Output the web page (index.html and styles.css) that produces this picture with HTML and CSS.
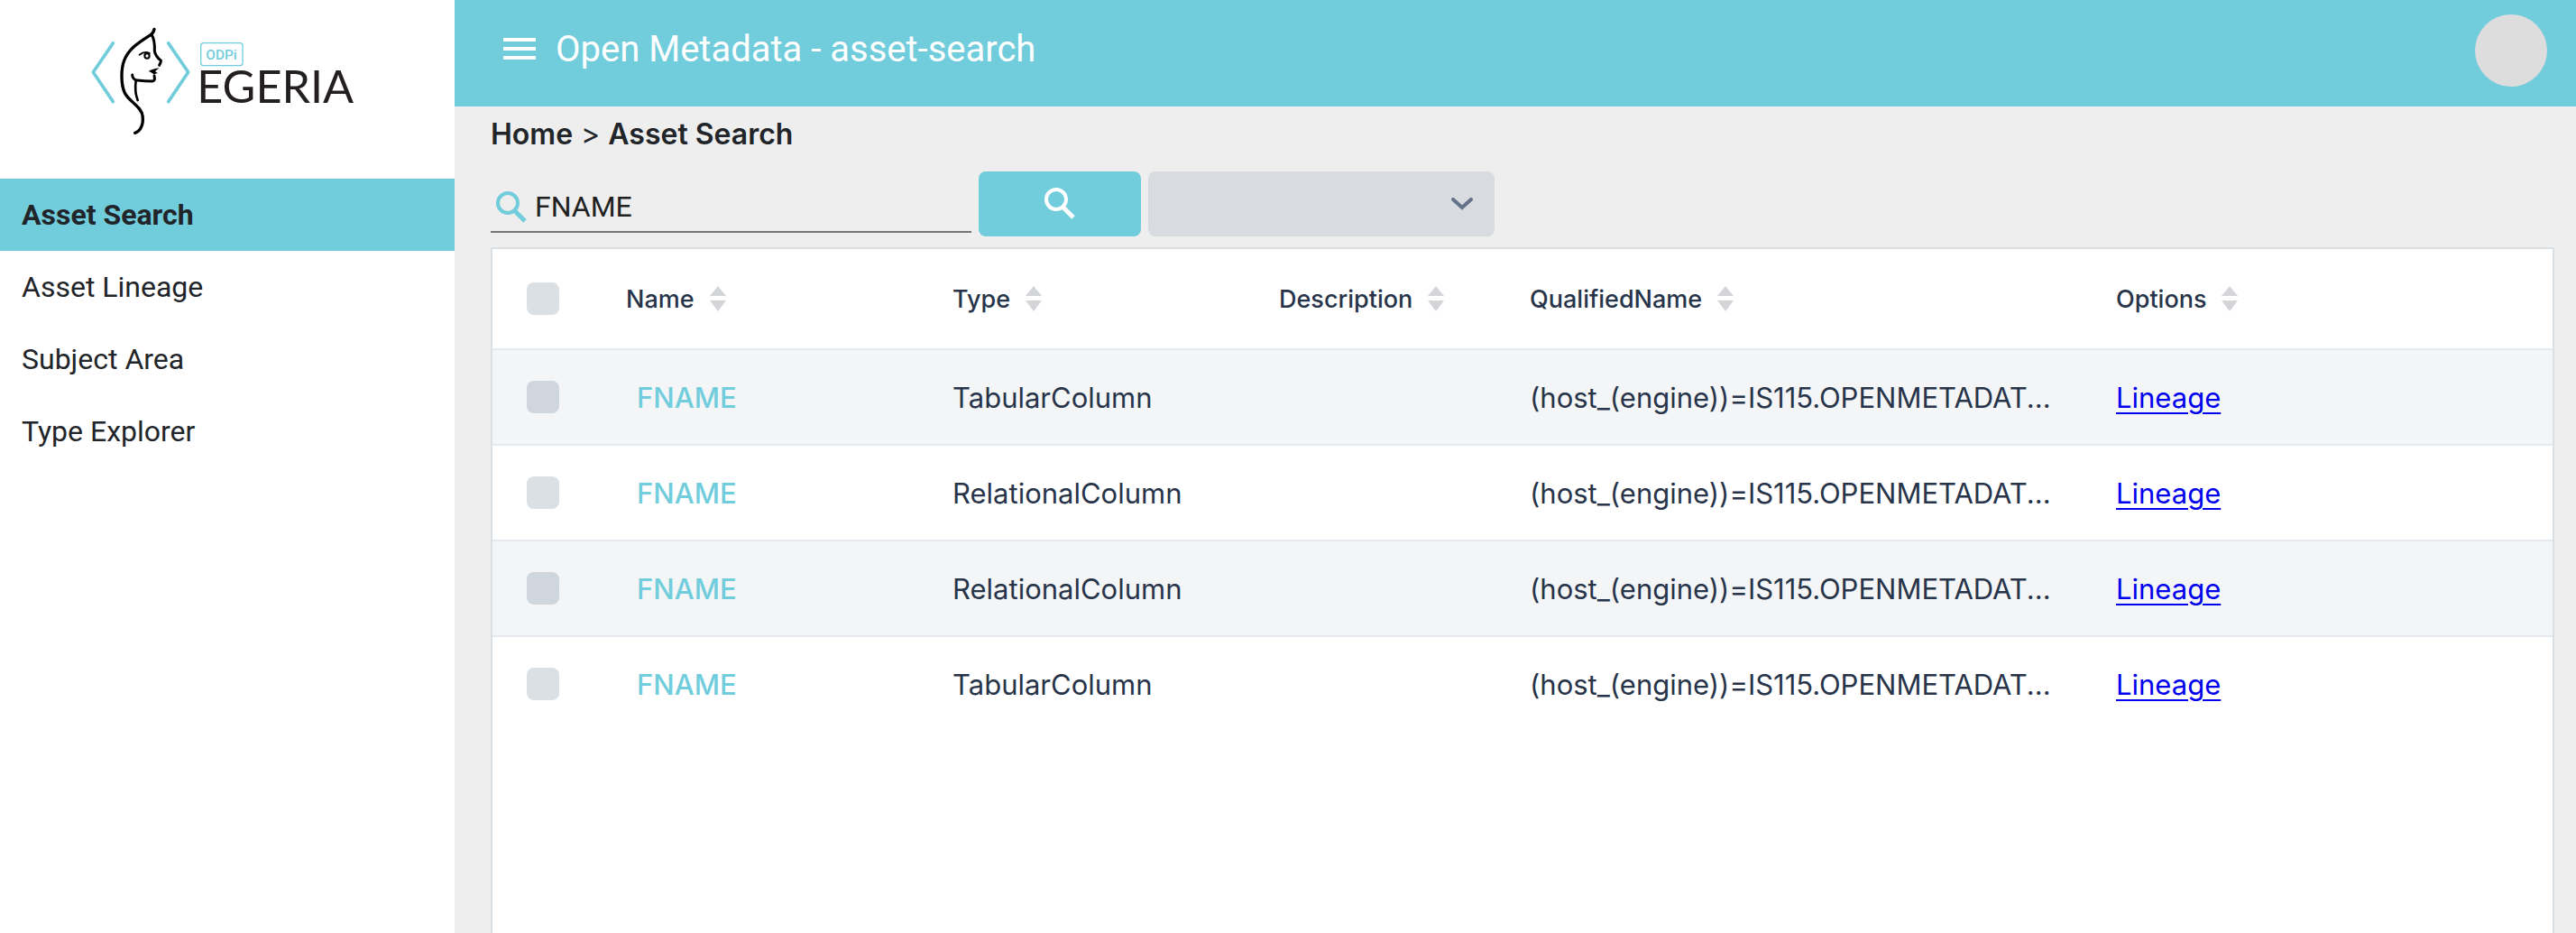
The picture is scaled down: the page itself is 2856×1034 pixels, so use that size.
FILE: index.html
```html
<!DOCTYPE html>
<html lang="en">
<head>
<meta charset="utf-8">
<title>Open Metadata - asset-search</title>
<link rel="stylesheet" href="styles.css">
</head>
<body>
<svg class="sprite" aria-hidden="true">
  <symbol id="search" viewBox="0 0 36 36"><circle cx="14" cy="14" r="11" fill="none" stroke="currentColor" stroke-width="4"/><path d="M22 23l11 11" fill="none" stroke="currentColor" stroke-width="5"/></symbol>
  <symbol id="sort" viewBox="0 0 18 28"><path d="M9 0l9 11H0zM0 16h18L9 28z" fill="currentColor"/></symbol>
</svg>
<div class="app">
  <aside class="sidebar">
    <a class="logo" href="#">
      <svg viewBox="0 0 1020 480" role="img" aria-label="ODPi Egeria">
        <g fill="none" stroke-linecap="round" stroke-linejoin="round">
          <path d="M136 113L70 210l66 98M320 113l66 97-66 98" stroke="#71cddc" stroke-width="11"/>
          <g stroke="#000" stroke-width="10">
            <path d="M273 67c-2 10-6 15-12 19-38 25-72 44-88 85-11 29-11 80 2 108 14 29 56 45 59 76 4 27-5 51-25 57"/>
            <path d="M264 85c9 13 11 32 10 55 3 14 11 24 20 30 4 4-1 9-4 17" stroke-width="9"/>
            <path d="M200 219c1 12 6 17 17 18 17 2 33 3 49 3 8-1 10-6 7-18" stroke-width="9"/>
            <path d="M212 238c-3 21-3 42 6 65" stroke-width="8"/>
            <path d="M224 152c9-7 21-10 33-5" stroke-width="6"/>
            <circle cx="249" cy="156" r="8" stroke-width="6"/>
          </g>
        </g>
        <path d="M290 196c-12 2-26 5-36 11 9 3 14 7 19 11 4-3 8-4 12-4l-9-7z" fill="#000"/>
        <rect x="428" y="113" width="139" height="75" rx="9" fill="none" stroke="#71cddc" stroke-width="4"/>
        <text class="logo-tag" x="445" y="168">ODPi</text>
        <text class="logo-name" x="415" y="313">EGERIA</text>
      </svg>
    </a>
    <nav class="menu">
      <a class="active" href="#" aria-current="page">Asset Search</a>
      <a href="#">Asset Lineage</a>
      <a href="#">Subject Area</a>
      <a href="#">Type Explorer</a>
    </nav>
  </aside>
  <div class="page">
    <header class="topbar">
      <button class="burger" type="button" aria-label="Toggle menu"><svg viewBox="0 0 36 24"><path d="M0 2h36M0 12h36M0 22h36" stroke="#fff" stroke-width="4"/></svg></button>
      <h1>Open Metadata - asset-search</h1>
      <button class="avatar" type="button" aria-label="Account"></button>
    </header>
    <main class="content">
      <nav class="crumbs" aria-label="Breadcrumb"><a href="#">Home</a> <span>&gt;</span> <a href="#">Asset Search</a></nav>
      <form class="search">
        <label class="query"><svg class="icon"><use href="#search"/></svg><input type="text" value="FNAME" aria-label="Search"></label>
        <button class="go" type="submit" aria-label="Search"><svg class="icon"><use href="#search"/></svg></button>
        <div class="types">
          <select aria-label="Types"><option></option></select>
          <svg class="chevron" viewBox="0 0 24 14"><path d="M2 2l10 9L22 2" fill="none" stroke="#66728a" stroke-width="4" stroke-linecap="round"/></svg>
        </div>
      </form>
      <div class="grid">
        <table>
          <colgroup><col class="c-check"><col class="c-name"><col class="c-name"><col class="c-desc"><col class="c-qual"><col></colgroup>
          <thead>
            <tr>
              <th><input type="checkbox" aria-label="Select all"></th>
              <th>Name<svg class="sort"><use href="#sort"/></svg></th>
              <th>Type<svg class="sort"><use href="#sort"/></svg></th>
              <th>Description<svg class="sort"><use href="#sort"/></svg></th>
              <th>QualifiedName<svg class="sort"><use href="#sort"/></svg></th>
              <th>Options<svg class="sort"><use href="#sort"/></svg></th>
            </tr>
          </thead>
          <tbody>
            <tr><td><input type="checkbox" aria-label="Select row"></td><td><a class="asset" href="#">FNAME</a></td><td>TabularColumn</td><td></td><td>(host_(engine))=IS115.OPENMETADAT...</td><td><a class="lineage" href="#">Lineage</a></td></tr>
            <tr><td><input type="checkbox" aria-label="Select row"></td><td><a class="asset" href="#">FNAME</a></td><td>RelationalColumn</td><td></td><td>(host_(engine))=IS115.OPENMETADAT...</td><td><a class="lineage" href="#">Lineage</a></td></tr>
            <tr><td><input type="checkbox" aria-label="Select row"></td><td><a class="asset" href="#">FNAME</a></td><td>RelationalColumn</td><td></td><td>(host_(engine))=IS115.OPENMETADAT...</td><td><a class="lineage" href="#">Lineage</a></td></tr>
            <tr><td><input type="checkbox" aria-label="Select row"></td><td><a class="asset" href="#">FNAME</a></td><td>TabularColumn</td><td></td><td>(host_(engine))=IS115.OPENMETADAT...</td><td><a class="lineage" href="#">Lineage</a></td></tr>
          </tbody>
        </table>
      </div>
    </main>
  </div>
</div>
</body>
</html>
```
FILE: styles.css
```css
* { box-sizing: border-box; }
body { margin: 0; font-family: Inter, "Liberation Sans", sans-serif; font-size: 31px; color: #212529; background: #eee; }
a { color: inherit; text-decoration: none; }
button { border: 0; padding: 0; cursor: pointer; }
.sprite { display: none; }
.icon { width: 36px; height: 36px; flex: none; }

.app { display: flex; min-height: 100vh; }
.sidebar { flex: none; width: 504px; background: #fff; font-family: Roboto, sans-serif; font-size: 32px; }
.logo { display: block; height: 198px; padding: 10px 80px; }
.logo svg { display: block; width: 340px; height: 160px; }
.logo-tag { font: 500 46px Roboto, sans-serif; fill: #71cddc; }
.logo-name { font: 400 151px Lato, sans-serif; fill: #231f20; }
.menu { display: flex; flex-direction: column; }
.menu a { padding: 0 24px; line-height: 80px; }
.menu .active { background: #71cddc; font-weight: 700; }

.page { flex: 1; min-width: 0; display: flex; flex-direction: column; }
.topbar { display: flex; align-items: center; height: 118px; padding: 0 32px 6px 54px; background: #71cddc; color: #fff; }
.topbar h1 { flex: 1; margin: 0 0 0 22px; padding-bottom: 2px; font: 400 40px/48px Roboto, sans-serif; }
.burger { background: none; width: 36px; height: 24px; margin-bottom: 4px; }
.burger svg { display: block; width: 36px; height: 24px; }
.avatar { width: 80px; height: 80px; border-radius: 50%; background: #ddd; }

.content { flex: 1; display: flex; flex-direction: column; padding: 0 24px 0 40px; }
.crumbs { height: 72px; font-size: 32px; line-height: 62px; }
.crumbs a { font-weight: 600; }
.search { display: flex; gap: 8px; height: 84px; }
.query { display: flex; align-items: center; width: 533px; height: 68px; padding: 12px 0 0 5px; border-bottom: 2px solid #757575; color: #71cddc; }
.query input { flex: 1; min-width: 0; height: 48px; padding: 0 0 0 8px; border: 0; outline: 0; background: none; font: 400 32px Roboto, sans-serif; color: #212121; }
.go { width: 180px; height: 72px; border-radius: 8px; background: #71cddc; color: #fff; }
.types { display: grid; width: 384px; height: 72px; }
.types select { grid-area: 1 / 1; appearance: none; border: 0; border-radius: 8px; background: #d8dbe0; font: inherit; }
.chevron { grid-area: 1 / 1; place-self: center end; width: 24px; height: 14px; margin-right: 24px; pointer-events: none; }

.grid { flex: 1; border: 2px solid #dadfe4; border-bottom: 0; background: #fff; color: #273449; }
table { width: 100%; table-layout: fixed; border-collapse: separate; border-spacing: 0; }
.c-check { width: 116px; }
.c-name { width: 362px; }
.c-desc { width: 278px; }
.c-qual { width: 650px; }
th, td { padding: 0 32px; text-align: left; white-space: nowrap; border-bottom: 2px solid #e6e9ed; }
th { height: 112px; font-size: 27px; font-weight: 500; }
td { height: 106px; }
th:first-child, td:first-child { padding: 0 38px; }
tbody tr:nth-child(odd) { background: #f3f5f7; }
tbody tr:last-child td { border-bottom-color: transparent; }
.sort { width: 18px; height: 28px; margin-left: 17px; vertical-align: -4px; color: #d4d5d9; }
input[type="checkbox"] { display: block; appearance: none; width: 36px; height: 36px; margin: 0; border-radius: 8px; background: #dae0e4; }
tbody tr:nth-child(odd) input { background: #cfd6dd; }
.asset { padding-left: 12px; font-weight: 500; color: #71cddc; }
.lineage { color: #00e; text-decoration: underline; text-decoration-thickness: 2px; text-underline-offset: 5px; }
```
